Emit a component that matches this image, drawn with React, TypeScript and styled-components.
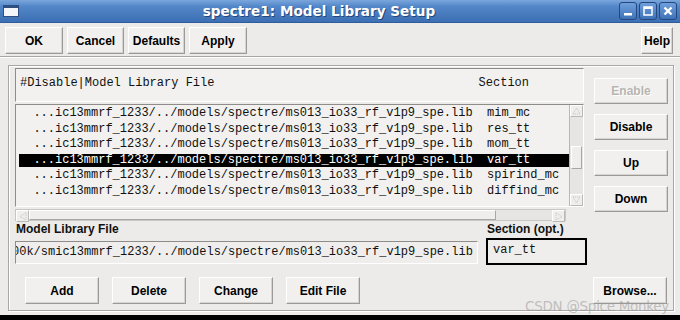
import styled, { createGlobalStyle } from "styled-components";

const GlobalStyle = createGlobalStyle`
  html, body {
    margin: 0;
    padding: 0;
    background: #000;
  }
  * {
    box-sizing: border-box;
  }
`;

const Window = styled.div`
  position: relative;
  width: 680px;
  height: 315px;
  display: flex;
  flex-direction: column;
  background: #ecebe9;
  font-family: "Liberation Sans", Arial, sans-serif;
  overflow: hidden;
`;

const TitleBar = styled.div`
  position: relative;
  height: 23px;
  display: flex;
  align-items: center;
  padding: 0 3px;
  background: linear-gradient(#7aa6dc 0%, #5286c8 30%, #3c6fb3 100%);
  border-bottom: 1px solid #2f5d9c;
`;

const WindowIcon = styled.div`
  width: 16px;
  height: 12px;
  background: #f4f6fa;
  border: 1px solid #2d4f82;
  border-top-width: 3px;
`;

const Title = styled.div`
  flex: 1;
  text-align: center;
  color: #fff;
  font-family: "DejaVu Sans", Verdana, sans-serif;
  font-weight: bold;
  font-size: 13.6px;
  text-shadow: 1px 1px 0 #24467a;
`;

const Controls = styled.div`
  display: flex;
  gap: 2px;
`;

const CtrlButton = styled.div`
  width: 18px;
  height: 18px;
  border: 1px solid #24487e;
  border-radius: 3px;
  background: linear-gradient(#6f9fdc, #3e72b8);
  display: flex;
  align-items: center;
  justify-content: center;
`;

const Toolbar = styled.div`
  display: flex;
  align-items: center;
  gap: 4px;
  padding: 3px 7px 0 5px;
  height: 32px;
`;

const Button = styled.div<{ $w?: number; $h?: number; $disabled?: boolean }>`
  width: ${(p) => (p.$w ? `${p.$w}px` : "auto")};
  height: ${(p) => p.$h ?? 27}px;
  padding: 0 4px;
  display: flex;
  align-items: center;
  justify-content: center;
  background: #f1f0ee;
  border: 1px solid;
  border-color: #ffffff #9c9a97 #9c9a97 #ffffff;
  box-shadow: inset -1px -1px 0 #d6d4d1;
  font-weight: bold;
  font-size: 12px;
  color: ${(p) => (p.$disabled ? "#b7b5b2" : "#000")};
  text-shadow: ${(p) => (p.$disabled ? "1px 1px 0 #fff" : "none")};
`;

const Spacer = styled.div`
  flex: 1;
`;

const Separator = styled.div`
  height: 2px;
  margin-top: 1px;
  border-top: 1px solid #a9a7a4;
  border-bottom: 1px solid #fff;
`;

const Frame = styled.div`
  flex: 1;
  margin: 7px 6px 4px 8px;
  border: 1px solid #a9a7a4;
  box-shadow: inset 1px 1px 0 #fff, 1px 1px 0 #fff;
  padding: 2px 6px 0 6px;
  display: flex;
  flex-direction: column;
`;

const TopArea = styled.div`
  display: grid;
  grid-template-columns: 569px 1fr;
  column-gap: 10px;
`;

const ListColumn = styled.div`
  display: flex;
  flex-direction: column;
`;

const HeaderBox = styled.div`
  height: 34px;
  border: 1px solid;
  border-color: #8f8d8a #ffffff #ffffff #8f8d8a;
  background: #f2f1ef;
  padding: 7px 0 0 4px;
  display: flex;
  font-family: "Liberation Mono", "Courier New", monospace;
  font-size: 12px;
  white-space: pre;
  color: #111;
`;

const HeaderSection = styled.span`
  margin-left: auto;
  margin-right: 54px;
`;

const ListBox = styled.div`
  margin-top: 2px;
  height: 103px;
  display: flex;
  border: 1px solid;
  border-color: #8f8d8a #ffffff #ffffff #8f8d8a;
  background: #f2f1ef;
`;

const Rows = styled.div`
  flex: 1;
  padding: 2px 0 0 3px;
  overflow: hidden;
`;

const Row = styled.div<{ $selected?: boolean }>`
  height: 13px;
  line-height: 13px;
  margin-bottom: 2.5px;
  font-family: "Liberation Mono", "Courier New", monospace;
  font-size: 12px;
  white-space: pre;
  background: ${(p) => (p.$selected ? "#000" : "transparent")};
  color: ${(p) => (p.$selected ? "#fff" : "#111")};
`;

const VScroll = styled.div`
  width: 14px;
  display: flex;
  flex-direction: column;
  border-left: 1px solid #b9b7b4;
  background: #e6e5e3;
`;

const Arrow = styled.div`
  width: 13px;
  height: 12px;
  display: flex;
  align-items: center;
  justify-content: center;
  border: 1px solid;
  border-color: #fff #bbb9b6 #bbb9b6 #fff;
  background: #efeeec;
`;

const Trough = styled.div<{ $grow?: number }>`
  flex: ${(p) => p.$grow ?? 1};
`;

const VThumb = styled.div`
  height: 23px;
  margin: 0 1px;
  border: 1px solid;
  border-color: #fff #a9a7a4 #a9a7a4 #fff;
  background: #efeeec;
`;

const HScrollRow = styled.div`
  margin-top: 2px;
  display: flex;
  height: 12px;
`;

const HScroll = styled.div`
  width: 551px;
  display: flex;
  border: 1px solid #c8c6c3;
  background: #e6e5e3;
`;

const HThumb = styled.div`
  width: 467px;
  border: 1px solid;
  border-color: #fff #a9a7a4 #a9a7a4 #fff;
  background: #efeeec;
`;

const SideButtons = styled.div`
  display: flex;
  flex-direction: column;
  gap: 10px;
  padding-top: 10px;
  width: 74px;
`;

const FormRow = styled.div`
  display: flex;
  gap: 8px;
  margin-top: 1px;
`;

const Field = styled.div<{ $w: number }>`
  width: ${(p) => p.$w}px;
  display: flex;
  flex-direction: column;
  gap: 5px;
`;

const Label = styled.div`
  font-weight: bold;
  font-size: 12px;
  height: 14px;
  line-height: 14px;
  padding-left: 1px;
  color: #111;
`;

const Entry = styled.div<{ $strong?: boolean }>`
  height: ${(p) => (p.$strong ? "27px" : "23px")};
  margin-top: ${(p) => (p.$strong ? "-3px" : "0")};
  border: ${(p) => (p.$strong ? "2px solid #000" : "1px solid")};
  border-color: ${(p) =>
    p.$strong ? "#000" : "#8f8d8a #ffffff #ffffff #8f8d8a"};
  background: #efeeec;
  padding: ${(p) => (p.$strong ? "3px 0 0 5px" : "3px 0 0 2px")};
  font-family: "Liberation Mono", "Courier New", monospace;
  font-size: 12px;
  white-space: pre;
  overflow: hidden;
  color: #111;
`;

const Clipped = styled.span`
  margin-left: -6px;
`;

const BottomRow = styled.div`
  display: flex;
  gap: 13px;
  margin-top: 12px;
  padding-left: 10px;
`;

const Watermark = styled.div`
  position: absolute;
  right: 11px;
  bottom: 1px;
  font-family: "DejaVu Sans", sans-serif;
  font-size: 13.5px;
  color: rgba(150, 150, 150, 0.55);
  letter-spacing: -0.3px;
`;

const files = [
  ["mim_mc", false],
  ["res_tt", false],
  ["mom_tt", false],
  ["var_tt", true],
  ["spirind_mc", false],
  ["diffind_mc", false],
] as const;

const path = "...ic13mmrf_1233/../models/spectre/ms013_io33_rf_v1p9_spe.lib";

const UpTri = () => (
  <svg width="9" height="8" viewBox="0 0 9 8">
    <path d="M1 7 L4.5 1 L8 7 Z" fill="none" stroke="#c4c2bf" strokeDasharray="1 1" />
  </svg>
);

const DownTri = () => (
  <svg width="9" height="8" viewBox="0 0 9 8">
    <path d="M1 1 L4.5 7 L8 1 Z" fill="none" stroke="#c4c2bf" strokeDasharray="1 1" />
  </svg>
);

const LeftTri = () => (
  <svg width="8" height="9" viewBox="0 0 8 9">
    <path d="M7 1 L1 4.5 L7 8 Z" fill="none" stroke="#c4c2bf" strokeDasharray="1 1" />
  </svg>
);

const RightTri = () => (
  <svg width="8" height="9" viewBox="0 0 8 9">
    <path d="M1 1 L7 4.5 L1 8 Z" fill="none" stroke="#c4c2bf" strokeDasharray="1 1" />
  </svg>
);

export default function App() {
  return (
    <>
      <GlobalStyle />
      <Window>
        <TitleBar>
          <WindowIcon />
          <Title>spectre1: Model Library Setup</Title>
          <Controls>
            <CtrlButton>
              <svg width="12" height="12" viewBox="0 0 12 12">
                <rect x="2" y="8" width="8" height="2.5" fill="#fff" />
              </svg>
            </CtrlButton>
            <CtrlButton>
              <svg width="12" height="12" viewBox="0 0 12 12">
                <rect x="2" y="2" width="8" height="8" fill="none" stroke="#fff" strokeWidth="1.5" />
                <rect x="2" y="2" width="8" height="2" fill="#fff" />
              </svg>
            </CtrlButton>
            <CtrlButton>
              <svg width="12" height="12" viewBox="0 0 12 12">
                <path d="M2.5 2.5 L9.5 9.5 M9.5 2.5 L2.5 9.5" stroke="#fff" strokeWidth="2.4" />
              </svg>
            </CtrlButton>
          </Controls>
        </TitleBar>

        <Toolbar>
          <Button $w={58}>OK</Button>
          <Button $w={57}>Cancel</Button>
          <Button $w={57}>Defaults</Button>
          <Button $w={58}>Apply</Button>
          <Spacer />
          <Button $w={32}>Help</Button>
        </Toolbar>
        <Separator />

        <Frame>
          <TopArea>
            <ListColumn>
              <HeaderBox>
                <span>#Disable|Model Library File</span>
                <HeaderSection>Section</HeaderSection>
              </HeaderBox>
              <ListBox>
                <Rows>
                  {files.map(([section, selected]) => (
                    <Row key={section} $selected={selected}>
                      {"  " + path + "  " + section}
                    </Row>
                  ))}
                </Rows>
                <VScroll>
                  <Arrow>
                    <UpTri />
                  </Arrow>
                  <Trough $grow={31} />
                  <VThumb />
                  <Trough $grow={27} />
                  <Arrow>
                    <DownTri />
                  </Arrow>
                </VScroll>
              </ListBox>
              <HScrollRow>
                <HScroll>
                  <Arrow>
                    <LeftTri />
                  </Arrow>
                  <HThumb />
                  <Trough />
                  <Arrow>
                    <RightTri />
                  </Arrow>
                </HScroll>
              </HScrollRow>
            </ListColumn>
            <SideButtons>
              <Button $h={26} $disabled>Enable</Button>
              <Button $h={26}>Disable</Button>
              <Button $h={26}>Up</Button>
              <Button $h={26}>Down</Button>
            </SideButtons>
          </TopArea>

          <FormRow>
            <Field $w={463}>
              <Label>Model Library File</Label>
              <Entry>
                <Clipped>00k/smic13mmrf_1233/../models/spectre/ms013_io33_rf_v1p9_spe.lib</Clipped>
              </Entry>
            </Field>
            <Field $w={101}>
              <Label>Section (opt.)</Label>
              <Entry $strong>var_tt</Entry>
            </Field>
          </FormRow>

          <BottomRow>
            <Button $w={74}>Add</Button>
            <Button $w={74}>Delete</Button>
            <Button $w={74}>Change</Button>
            <Button $w={74}>Edit File</Button>
            <Spacer />
            <Button $w={74}>Browse...</Button>
          </BottomRow>
        </Frame>
        <Watermark>CSDN @Spice Monkey</Watermark>
      </Window>
    </>
  );
}
